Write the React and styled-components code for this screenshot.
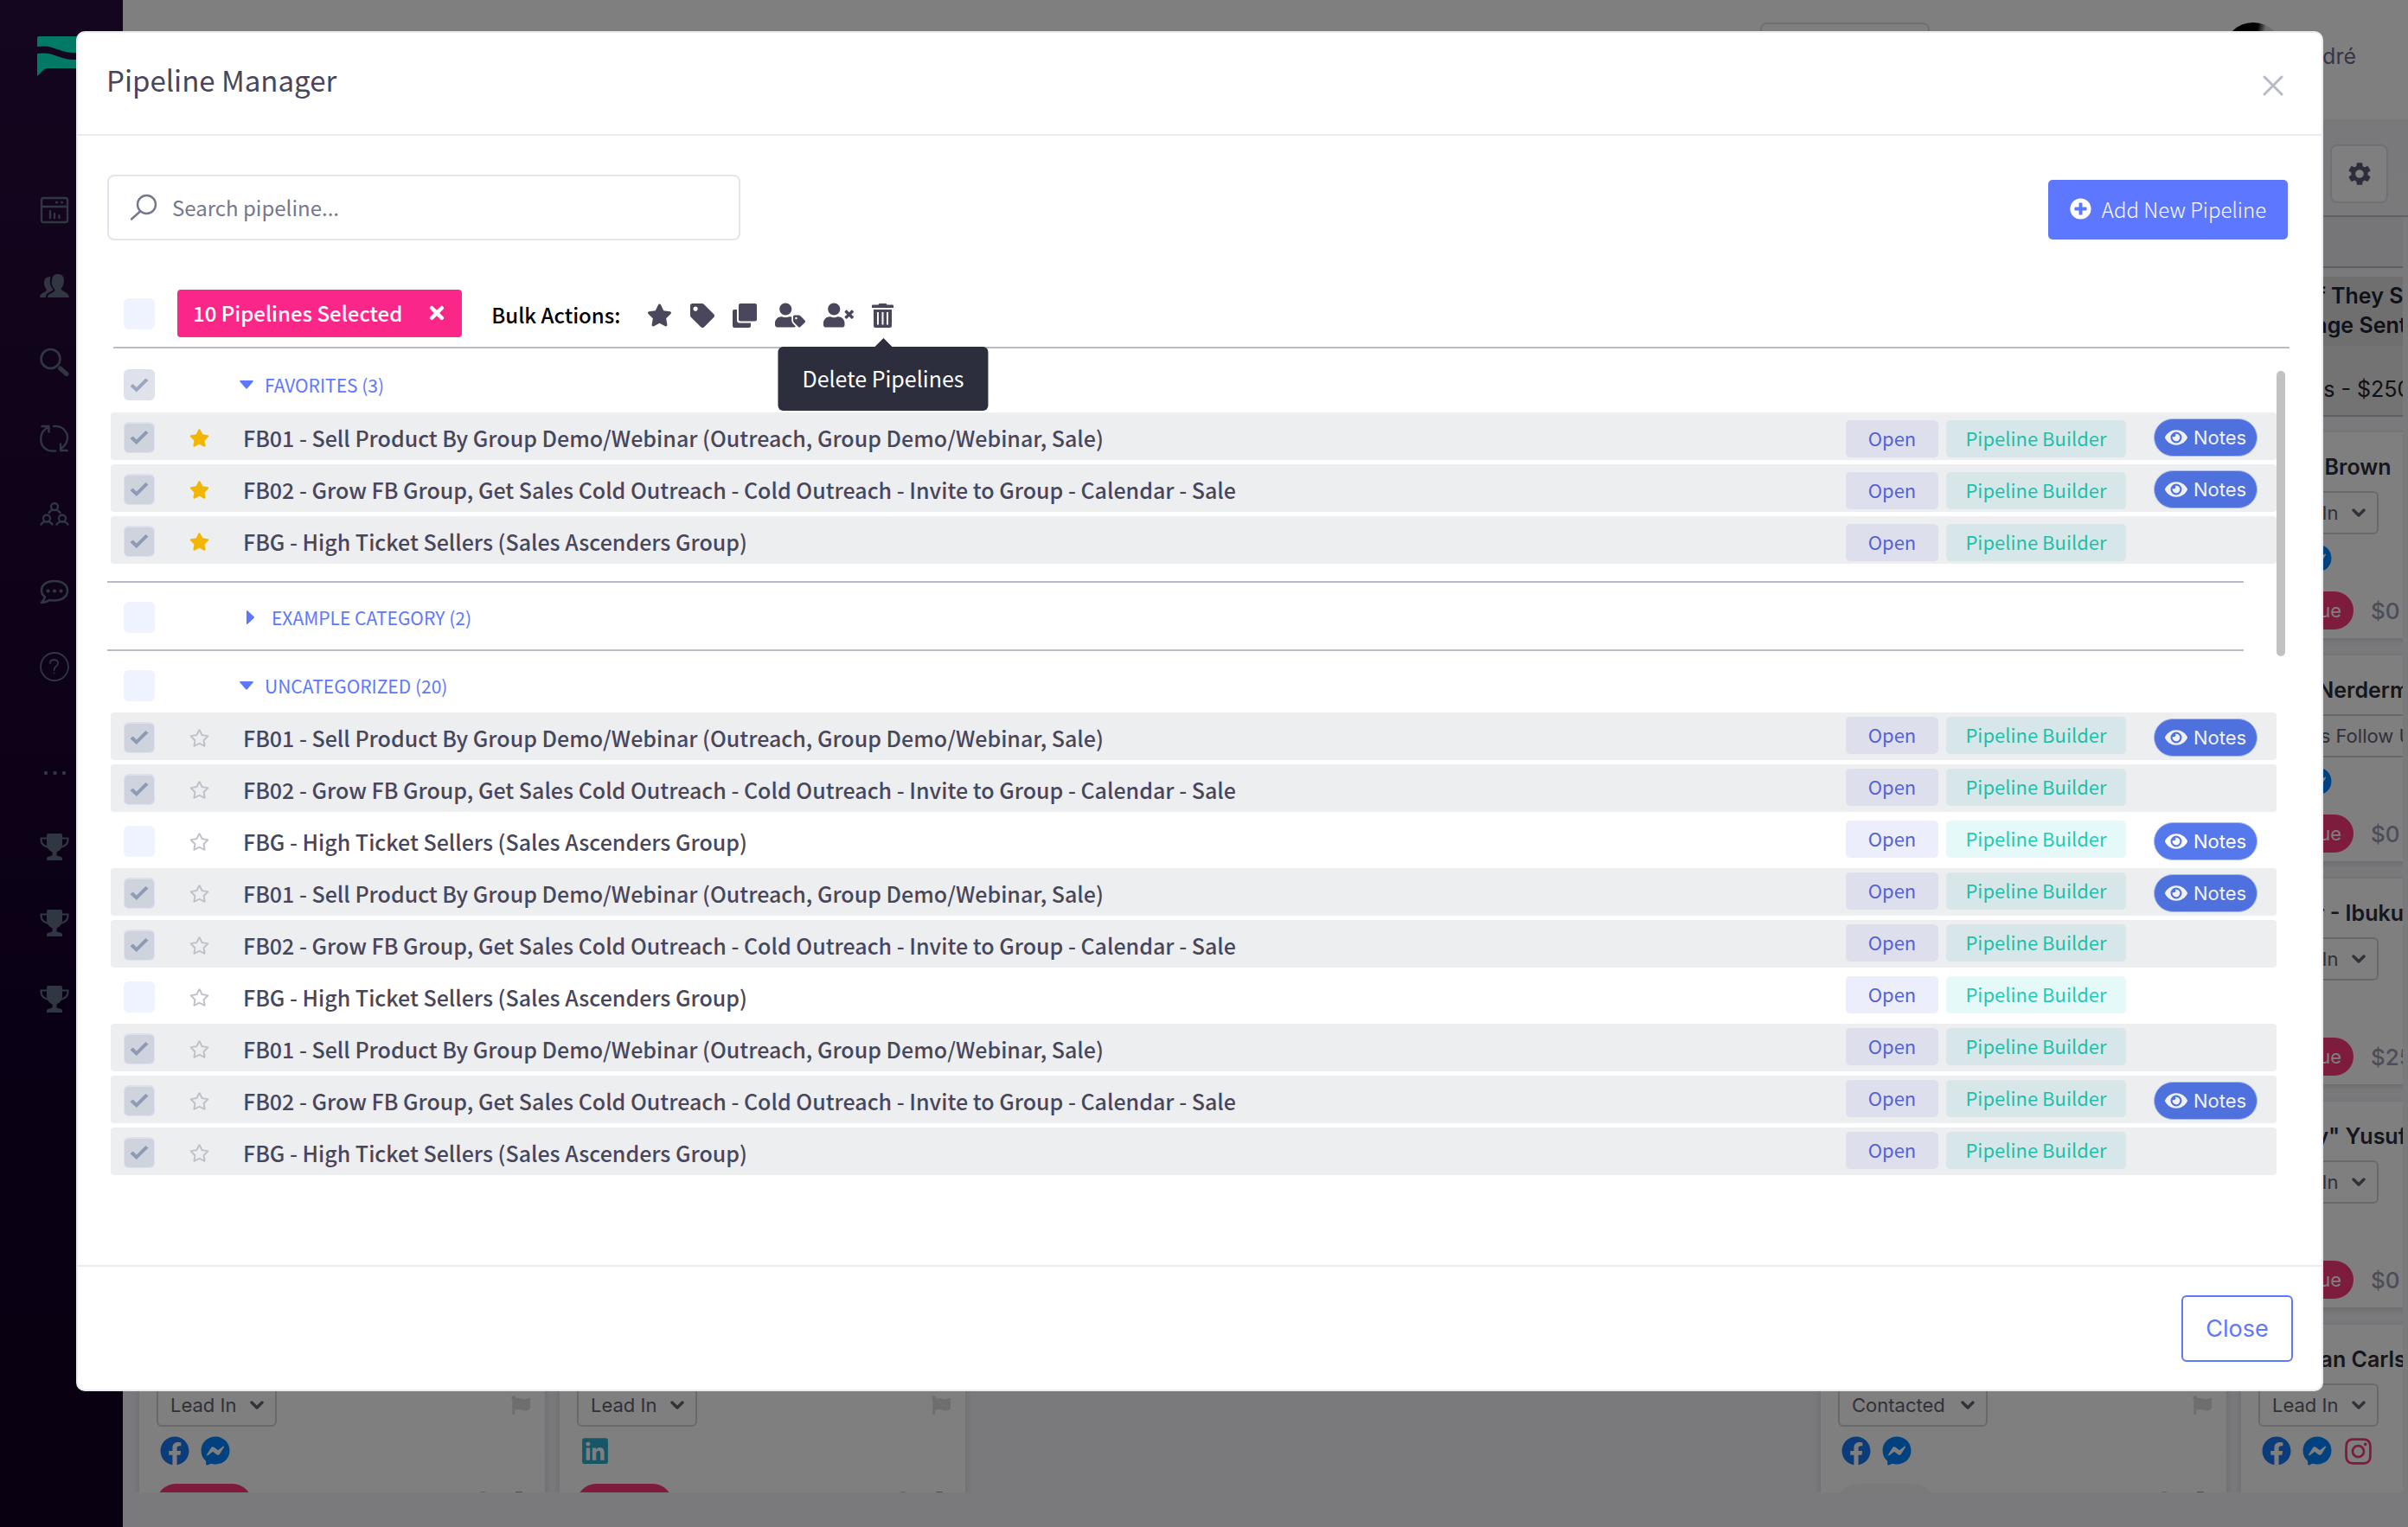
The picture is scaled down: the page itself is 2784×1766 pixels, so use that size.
import React, { useState } from "react";
import styled, { createGlobalStyle, css } from "styled-components";
import {
  FaStar, FaTag, FaUserTag, FaUserTimes, FaRegStar, FaEye, FaPlusCircle, FaTimes,
  FaFacebook, FaFacebookMessenger, FaLinkedin, FaInstagram, FaFlag, FaTrashAlt, FaUserCircle,
} from "react-icons/fa";
import { MdSettings } from "react-icons/md";

const sans = `"Noto Sans CJK JP", "Noto Sans", sans-serif`;
const ui = `Inter, "Noto Sans", sans-serif`;
const ink = "#48465b";
const brand = "#5d78ff";
const rule = "#b9bbc6";
const line = "#e9ebf1";

const GlobalStyle = createGlobalStyle`
  *, *::before, *::after { box-sizing: border-box; }
  body { margin: 0; background: #f4f4f8; font-family: ${ui}; color: ${ink}; }
  button, input, select { font: inherit; color: inherit; margin: 0; }
  button { border: 0; padding: 0; background: none; cursor: pointer; }
  svg { display: block; }
`;

/* ---------- page behind the dialog ---------- */

const Page = styled.div`
  display: flex;
  height: 100vh;
  overflow: hidden;
`;

const Sidebar = styled.nav`
  flex: none;
  display: flex;
  flex-direction: column;
  width: 142px;
  padding: 42px 0 0 42px;
  background: linear-gradient(#280c3c, #14002a 70%, #120022);
  color: #626d87;
`;

const LogoLink = styled.a`
  height: 157px;
`;

const NavButton = styled.button`
  display: flex;
  align-items: center;
  height: 88px;
  padding-left: 4px;
`;

const NavDots = styled(NavButton)`
  height: 121px;
  padding-top: 37px;
`;

const Main = styled.div`
  flex: 1;
  min-width: 0;
  display: flex;
  flex-direction: column;
  padding-bottom: 40px;
  background: linear-gradient(#ededf6, #f5f5f8 250px, #f4f4f8);
`;

const TopBar = styled.header`
  flex: none;
  display: flex;
  justify-content: flex-end;
  height: 138px;
  padding: 26px 60px 0;
  background: #fff;
`;

const TopSelect = styled.div`
  width: 196px;
  height: 70px;
  margin-right: 340px;
  border: 2px solid #e2e2ea;
  border-radius: 8px;
`;

const Avatar = styled.div`
  width: 68px;
  height: 68px;
  border-radius: 50%;
  background: linear-gradient(100deg, #000 50%, #d8d8d8 62%, #eee);
`;

const UserName = styled.span`
  margin-left: 14px;
  font-size: 25px;
  line-height: 78px;
  color: #6c6c90;
`;

const BoardTools = styled.div`
  flex: none;
  display: flex;
  justify-content: flex-end;
  align-items: center;
  height: 113px;
  padding: 15px 23px 0;
  border-bottom: 2px solid #c4c4c8;
`;

const GearButton = styled.button`
  display: grid;
  place-items: center;
  width: 67px;
  height: 68px;
  border: 2px solid #e0e0ea;
  border-radius: 8px;
  background: #fff;
  color: #5c5a78;
`;

const Board = styled.div`
  flex: 1;
  min-height: 0;
  display: flex;
  gap: 17px;
  margin-right: 6px;
  padding-left: 19px;
  overflow: hidden;
`;

const Column = styled.section`
  flex: none;
  width: 469px;
`;

const ColumnBar = styled.div`
  height: 59px;
  margin-bottom: 10px;
  background: #ececf0;
  border-bottom: 2px solid #bdbdc0;
`;

const ColumnHead = styled.header`
  height: 80px;
  padding: 5px 20px 0;
  background: #dfdfe0;
  color: #222230;
  font-size: 25px;
  font-weight: 600;
  line-height: 34px;
  white-space: nowrap;
`;

const ColumnTotal = styled.div`
  height: 82px;
  margin-bottom: 18px;
  padding: 0 20px;
  border-bottom: 2px solid #c0c0c2;
  background: #e6e6e8;
  color: #222230;
  font-size: 25px;
  line-height: 100px;
  white-space: nowrap;
`;

const Card = styled.article`
  height: 238px;
  margin-bottom: 20px;
  padding: 24px 0 0 20px;
  background: #fff;
  box-shadow: 0 2px 8px rgba(0, 0, 0, 0.14);
  white-space: nowrap;
`;

const CardTitle = styled.h3`
  height: 44px;
  margin: 0;
  font-size: 25px;
  font-weight: 600;
  line-height: 32px;
  color: #2c2c3a;
`;

const CardRow = styled.div`
  display: flex;
  justify-content: space-between;
  align-items: center;
  padding-right: 17px;
  color: #dcdcdc;
`;

const StageBox = styled.label`
  display: grid;
  width: ${(p) => (p.$wide ? 260 : p.$long ? 173 : 139)}px;
  height: 50px;
  align-items: center;
  color: #626270;

  > * { grid-area: 1 / 1; }
  > svg { justify-self: end; margin-right: 15px; pointer-events: none; }
`;

const StageSelect = styled.select`
  appearance: none;
  width: 100%;
  height: 100%;
  padding: 0 0 0 14px;
  border: 2px solid #d2d2d8;
  border-radius: 6px;
  background: none;
  color: #626270;
  font-size: 22px;
`;

const Socials = styled.div`
  display: flex;
  align-items: center;
  gap: 13px;
  height: 34px;
  margin: 11px 0 21px 4px;
`;

const CardFoot = styled.div`
  display: flex;
  align-items: center;
  gap: 20px;
  height: 44px;
  font-size: 26px;
  font-weight: 500;
  color: #9a9ab2;
`;

const Pill = styled.span`
  width: 110px;
  padding-right: 14px;
  border-radius: 22px;
  background: ${(p) => (p.$muted ? "#f5f5f5" : "#fd397a")};
  color: #fff;
  font-size: 22px;
  font-weight: 400;
  line-height: 44px;
  height: 44px;
  text-align: right;
`;

const FootIcons = styled.div`
  display: flex;
  gap: 18px;
  margin: 0 17px 0 auto;
`;

/* ---------- dialog ---------- */

const Backdrop = styled.div`
  position: fixed;
  inset: 0;
  padding: 36px 98px 0 88px;
  background: rgba(0, 0, 0, 0.5);
`;

const Dialog = styled.section`
  border: 2px solid ${line};
  border-radius: 10px;
  background: #fff;
  font-family: ${sans};
`;

const DialogHeader = styled.header`
  display: flex;
  justify-content: space-between;
  align-items: center;
  height: 119px;
  padding: 4px 44px 0 33px;
  border-bottom: 2px solid ${line};
`;

const DialogTitle = styled.h1`
  margin: 0;
  padding-bottom: 14px;
  font-size: 33px;
  font-weight: 400;
  line-height: 44px;
  color: ${ink};
`;

const DialogBody = styled.div`
  padding: 45px 37px 104px 34px;
`;

const Toolbar = styled.div`
  display: flex;
  justify-content: space-between;
  align-items: center;
  margin-right: 2px;
`;

const SearchBox = styled.label`
  display: flex;
  align-items: center;
  gap: 17px;
  width: 732px;
  height: 76px;
  padding: 0 24px;
  border: 2px solid #e2e5ec;
  border-radius: 8px;
  color: #74788d;
`;

const SearchInput = styled.input`
  flex: 1;
  border: 0;
  outline: 0;
  padding: 0;
  background: none;
  font-size: 24px;
  line-height: 36px;

  &::placeholder { color: #74788d; opacity: 1; }
`;

const AddButton = styled.button`
  display: flex;
  justify-content: center;
  align-items: center;
  gap: 12px;
  width: 277px;
  height: 69px;
  margin-top: 5px;
  padding-bottom: 2px;
  border-radius: 5px;
  background: ${brand};
  color: #fff;
  font-size: 24px;
  font-weight: 300;
`;

const BulkBar = styled.div`
  display: flex;
  align-items: center;
  margin: 57px 0 0 7px;
  padding: 0 0 11px 12px;
  border-bottom: 2px solid ${rule};
`;

const SelectedBadge = styled.div`
  display: flex;
  align-items: center;
  gap: 28px;
  height: 55px;
  margin: 0 34px 0 26px;
  padding: 0 17px 2px 18px;
  border-radius: 4px;
  background: #fb2788;
  color: #fff;
  font-size: 24px;
  font-weight: 500;
`;

const BulkLabel = styled.span`
  margin-right: 31px;
  padding-top: 3px;
  font-size: 24px;
  font-weight: 500;
  line-height: 36px;
  color: #000;
`;

const BulkIcons = styled.div`
  display: flex;
  align-items: center;
  gap: 21px;
  padding-top: 4px;
  color: #4a465c;
`;

const BulkButton = styled.button`
  position: relative;
  display: block;
`;

const Tooltip = styled.span`
  position: absolute;
  top: calc(100% + 22px);
  left: 50%;
  transform: translateX(-50%);
  z-index: 2;
  padding: 0 28px 2px;
  border-radius: 6px;
  background: #2c2e3e;
  color: #fff;
  font-size: 25px;
  line-height: 72px;
  white-space: nowrap;

  &::before {
    content: "";
    position: absolute;
    bottom: 100%;
    left: 50%;
    margin-left: -10px;
    border: 10px solid transparent;
    border-top: 0;
    border-bottom-color: #2c2e3e;
  }
`;

const ListArea = styled.div`
  display: flex;
  padding-right: 5px;
`;

const List = styled.div`
  flex: 1;
  min-width: 0;
`;

const ScrollThumb = styled.div`
  width: 10px;
  height: 330px;
  margin-top: 26px;
  border-radius: 5px;
  background: #c2c2c2;
`;

const Group = styled.section`
  margin-top: ${(p) => (p.$spaced ? 20 : 0)}px;

  &:not(:first-child)::before {
    content: "";
    display: block;
    height: 2px;
    margin-right: 38px;
    background: ${rule};
  }
`;

const GroupHead = styled.header`
  display: flex;
  align-items: center;
  gap: 98px;
  height: ${(p) => p.$height}px;
  padding: ${(p) => p.$top}px 0 0 19px;
`;

const GroupToggle = styled.button`
  display: flex;
  align-items: center;
  gap: ${(p) => (p.$open ? 13 : 20)}px;
  padding-left: ${(p) => (p.$open ? 0 : 8)}px;
  font-size: 21px;
  line-height: 30px;
  color: ${brand};
`;

const Rows = styled.ul`
  display: flex;
  flex-direction: column;
  gap: 5px;
  margin: 0 0 0 4px;
  padding: 0;
  list-style: none;
`;

const Row = styled.li`
  display: flex;
  align-items: center;
  height: 55px;
  padding: 2px 22px 0 15px;
  border-radius: 4px;
  background: ${(p) => (p.$selected ? "#edeef0" : "transparent")};
`;

const Check = styled.input.attrs({ type: "checkbox" })`
  appearance: none;
  flex: none;
  display: grid;
  place-items: center;
  width: 36px;
  height: 36px;
  border-radius: 6px;
  background: #eff2ff;

  &:checked {
    border: 1px solid #dde1ef;
    border-top-width: 2px;
    background: ${(p) => (p.$light ? "#dfe2eb" : "#ced3de")};
  }
  &:checked::after {
    content: "";
    width: 21px;
    height: 16px;
    background: ${(p) => (p.$light ? "#9aa7c0" : "#8f9bb5")};
    clip-path: polygon(0 58%, 15% 40%, 35% 65%, 85% 0, 100% 16%, 35% 100%);
  }
`;

const StarButton = styled.button`
  margin: 1px 39px 0 40px;
  color: ${(p) => (p.$on ? "#f2b600" : "#c0c1c8")};
`;

const Name = styled.span`
  flex: 1;
  font-size: 25px;
  font-weight: 500;
  line-height: 36px;
  color: ${ink};
`;

const Chips = styled.div`
  display: flex;
  gap: 9px;
  align-self: flex-start;
  padding-top: ${(p) => (p.$low ? 7 : 3)}px;
`;

const chip = css`
  height: 43px;
  padding-bottom: 3px;
  border-radius: 5px;
  font-size: 22px;
  line-height: 30px;
`;

const OpenButton = styled.button`
  ${chip}
  width: 107px;
  background: ${(p) => (p.$selected ? "#dedfec" : "#eceefc")};
  color: #5561d6;
`;

const BuilderButton = styled.button`
  ${chip}
  width: 208px;
  background: ${(p) => (p.$selected ? "#d7e7e9" : "#e6f9f9")};
  color: ${(p) => (p.$selected ? "#1dbfaa" : "#1dcbb4")};
`;

const NotesSlot = styled.div`
  width: 120px;
  margin-left: 32px;
`;

const NotesButton = styled.button`
  display: flex;
  justify-content: center;
  align-items: center;
  gap: 7px;
  width: 120px;
  height: 44px;
  border: 1px solid #a9b8ee;
  border-radius: 22px;
  background: ${(p) => (p.$selected ? "#4f71de" : "#5578ec")};
  color: ${(p) => (p.$selected ? "#f0f1f4" : "#fff")};
  font-family: ${ui};
  font-size: 22px;
`;

const DialogFooter = styled.footer`
  display: flex;
  justify-content: flex-end;
  align-items: center;
  height: 144px;
  padding-right: 33px;
  border-top: 2px solid ${line};
`;

const CloseButton = styled.button`
  width: 129px;
  height: 77px;
  border: 2px solid ${brand};
  border-radius: 6px;
  color: ${brand};
  font-family: ${ui};
  font-size: 27px;
`;

/* ---------- icons ---------- */

const stroke = { fill: "none", stroke: "currentColor", strokeLinecap: "round", strokeLinejoin: "round" };

const Logo = () => (
  <svg width="90" height="46" viewBox="0 0 90 46">
    <g fill="#00f5c8">
      <path d="M1 2Q1 0 3 0H90V10C70 10 62 20 42 19C24 18 20 9 1 12Z" />
      <path d="M1 20C20 17 24 26 42 27C62 28 70 18 90 18V37H14C8 37 6 42 1 46Z" />
    </g>
  </svg>
);

const DashboardIcon = () => (
  <svg width="34" height="34" viewBox="0 0 34 34" {...stroke} strokeWidth="2.4">
    <rect x="2" y="3" width="30" height="28" rx="2" />
    <path d="M2 13H32M12 18V26M17 21V26M22.500 23V26M19 8H20M25 8H26" />
  </svg>
);

const UsersIcon = () => (
  <svg width="34" height="34" viewBox="0 0 34 34" fill="currentColor">
    <path d="M14 10C15 4 17 3 21 3C26 3 28 6 28 11C28 15 26 18 24.500 20C26 24 33 23 34 30H9C9 26 13 26 15 24C17 23 18 22 17 20C14 17 13 14 14 10Z" />
    <path d="M12.500 6C7 6 5 9 5 13C5 16 6 19 8 21C7 25 0 24 0 30H7C7 25 10 25 13 23C15 22 16 21 15 20C12 17 11 12 12.500 6Z" />
  </svg>
);

const MagnifyIcon = () => (
  <svg width="34" height="34" viewBox="0 0 34 34" {...stroke}>
    <circle cx="12.500" cy="13" r="11" strokeWidth="2.600" />
    <path d="M23.500 24L31 30.500" strokeWidth="5" />
  </svg>
);

const SyncIcon = () => (
  <svg width="34" height="34" viewBox="0 0 34 34" {...stroke} strokeWidth="2.400">
    <path d="M10 4C-1 9-2 25 9 30.500Q13 32 18 31.500M2.500 3H10.500V9.500" />
    <path d="M16 3Q27 2 31.500 12Q34 22 24.500 29M24 23.500V31H31.500" />
  </svg>
);

const TeamIcon = () => (
  <svg width="34" height="34" viewBox="0 0 34 34" {...stroke} strokeWidth="2.300">
    <circle cx="17" cy="8" r="4" />
    <path d="M10.500 15Q12 13 14.500 11.500M23.500 15Q22 13 19.500 11.500" />
    <circle cx="8" cy="21.500" r="4" />
    <path d="M1.500 28.500Q3 26.500 5.500 25M14.500 28.500Q13 26.500 10.500 25" />
    <circle cx="26" cy="21.500" r="4" />
    <path d="M19.500 28.500Q21 26.500 23.500 25M32.500 28.500Q31 26.500 28.500 25" />
  </svg>
);

const ChatIcon = () => (
  <svg width="34" height="34" viewBox="0 0 34 34" {...stroke} strokeWidth="2.600">
    <path d="M17 6C8 6 2 10.500 2 17C2 20 3.500 22.500 6 24.500Q5 28 2 31Q8 30.500 11 28C25 30.500 32 24 32 17C32 10.500 26 6 17 6Z" />
    <path d="M9.500 17.500H9.600M17 17.500H17.100M24.500 17.500H24.600" strokeWidth="4.200" />
  </svg>
);

const HelpIcon = () => (
  <svg width="34" height="34" viewBox="0 0 34 34" {...stroke} strokeWidth="1.800">
    <circle cx="17" cy="17" r="16" />
    <path d="M12 13Q12 9 16.500 9Q21 9 21 13Q21 15.500 18.500 17Q16.500 18.500 16.500 21M16.500 24.500V24.600" />
  </svg>
);

const DotsIcon = () => (
  <svg width="34" height="6" viewBox="0 0 34 6" fill="currentColor">
    <circle cx="7" cy="3" r="2.200" />
    <circle cx="17.500" cy="3" r="2.200" />
    <circle cx="28" cy="3" r="2.200" />
  </svg>
);

const TrophyIcon = () => (
  <svg width="34" height="32" viewBox="0 0 34 32">
    <path d="M10 0H24Q26 0 26 2V12C26 17 23 20 19.500 21.500V25Q20 26 23 26.500Q26 27 26 29V31H8V29Q8 27 11 26.500Q14 26 14.500 25V21.500C11 20 8 17 8 12V2Q8 0 10 0Z" fill="currentColor" />
    <path d="M8 5.500H1.500C1 11 4 15 11 16M26 5.500H32.500C33 11 30 15 23 16" fill="none" stroke="currentColor" strokeWidth="2.200" />
  </svg>
);

const SearchIcon = () => (
  <svg width="32" height="32" viewBox="0 0 32 32" {...stroke} strokeWidth="2.400">
    <circle cx="19.500" cy="12.500" r="10.500" />
    <path d="M12 20.500L2 29.500" />
  </svg>
);

const CrossIcon = () => (
  <svg width="24" height="24" viewBox="0 0 24 24" {...stroke} stroke="#b9bac8" strokeWidth="3">
    <path d="M2 2L22 22M22 2L2 22" />
  </svg>
);

const CloneIcon = () => (
  <svg width="28" height="28" viewBox="0 0 28 28" fill="currentColor">
    <path d="M9 0H26Q28 0 28 2V18.500Q28 20.500 26 20.500H9Q7 20.500 7 18.500V2Q7 0 9 0Z" />
    <path d="M5 7H2Q0 7 0 9V26Q0 28 2 28H19Q21 28 21 26V22.500H8Q5 22.500 5 19.500Z" />
  </svg>
);

const TrashIcon = () => (
  <svg width="25" height="28" viewBox="0 0 25 28" fill="currentColor">
    <path d="M0 2.500Q0 1.500 1 1.500H7.500L8.500 0H16.500L17.500 1.500H24Q25 1.500 25 2.500V5H0Z" />
    <path fillRule="evenodd" d="M2 7H23V25.500Q23 28 20.500 28H4.500Q2 28 2 25.500ZM6 10V24.500H8V10ZM11.500 10V24.500H13.500V10ZM17 10V24.500H19V10Z" />
  </svg>
);

const Chevron = () => (
  <svg width="16" height="12" viewBox="0 0 16 12" {...stroke} strokeWidth="3.400">
    <path d="M2 3L8 9L14 3" />
  </svg>
);

const CaretDown = () => (
  <svg width="16" height="10" viewBox="0 0 16 10" fill="currentColor"><path d="M1 0H15Q16.500 0 15.500 1.500L9 9Q8 10 7 9L0.500 1.500Q-0.500 0 1 0Z" /></svg>
);

const CaretRight = () => (
  <svg width="9" height="16" viewBox="0 0 9 16" fill="currentColor"><path d="M0 1Q0-0.500 1.500 0.500L8.500 7Q9.300 8 8.500 9L1.500 15.500Q0 16.500 0 15Z" /></svg>
);

/* ---------- data ---------- */

const FB01 = "FB01 - Sell Product By Group Demo/Webinar (Outreach, Group Demo/Webinar, Sale)";
const FB02 = "FB02 - Grow FB Group, Get Sales Cold Outreach - Cold Outreach - Invite to Group - Calendar - Sale";
const FBG = "FBG - High Ticket Sellers (Sales Ascenders Group)";

const groups = [
  {
    title: "FAVORITES (3)", open: true, checked: true, height: 74, top: 10, low: true,
    rows: [[FB01, true, true], [FB02, true, true], [FBG, true, false]],
  },
  { title: "EXAMPLE CATEGORY (2)", open: false, checked: false, height: 77, top: 2, spaced: true, rows: [] },
  {
    title: "UNCATEGORIZED (20)", open: true, checked: false, height: 71, top: 8,
    rows: [
      [FB01, true, true], [FB02, true, false], [FBG, false, true],
      [FB01, true, true], [FB02, true, false], [FBG, false, false],
      [FB01, true, false], [FB02, true, true], [FBG, true, false],
    ],
  },
];

const leads = [
  { title: "Chloe Brown", stage: "Lead In", socials: ["fb", "ms"], amount: "$0" },
  { title: "Mark Nerdermann", stage: "Needs Follow Up", socials: ["fb", "ms"], amount: "$0" },
  { title: "Mayor - Ibukunle", stage: "Lead In", socials: [], amount: "$250" },
  { title: "\"Dejay\" Yusuf", stage: "Lead In", socials: [], amount: "$0" },
  { title: "Brendan Carlson", stage: "Lead In", socials: ["fb", "ms", "ig"] },
];

const columns = [
  { last: { stage: "Lead In", socials: ["fb", "ms"], pill: "due" } },
  { last: { stage: "Lead In", socials: ["in"], pill: "due" } },
  {},
  {},
  { last: { stage: "Contacted", socials: ["fb", "ms"], pill: "muted" } },
];

const socialIcons = {
  fb: <FaFacebook size={34} color="#1877f2" />,
  ms: <FaFacebookMessenger size={34} color="#0084ff" />,
  in: <FaLinkedin size={34} color="#2aaecf" />,
  ig: <FaInstagram size={35} color="#fd397a" />,
};

function Stage({ value }) {
  return (
    <StageBox $wide={value.length > 9} $long={value === "Contacted"}>
      <StageSelect aria-label="Stage" defaultValue={value}><option>{value}</option></StageSelect>
      <Chevron />
    </StageBox>
  );
}

function LeadCard({ lead, flag, children }) {
  return (
    <Card>
      <CardTitle>{lead.title}</CardTitle>
      <CardRow><Stage value={lead.stage} />{flag && <FaFlag size={22} />}</CardRow>
      <Socials>{lead.socials.map((s) => <React.Fragment key={s}>{socialIcons[s]}</React.Fragment>)}</Socials>
      <CardFoot>{children}</CardFoot>
    </Card>
  );
}

function PipelineRow({ name, selected, notes, favorite }) {
  const [checked, setChecked] = useState(selected);
  return (
    <Row $selected={checked}>
      <Check aria-label={name} checked={checked} onChange={(e) => setChecked(e.target.checked)} />
      <StarButton $on={favorite} aria-label="Favorite">
        {favorite ? <FaStar size={23} /> : <FaRegStar size={23} />}
      </StarButton>
      <Name>{name}</Name>
      <Chips $low={favorite}>
        <OpenButton $selected={checked}>Open</OpenButton>
        <BuilderButton $selected={checked}>Pipeline Builder</BuilderButton>
      </Chips>
      <NotesSlot>
        {notes && <NotesButton $selected={checked}><FaEye size={26} />Notes</NotesButton>}
      </NotesSlot>
    </Row>
  );
}

export default function App() {
  return (
    <>
      <GlobalStyle />
      <Page>
        <Sidebar>
          <LogoLink href="#" aria-label="Home"><Logo /></LogoLink>
          {[DashboardIcon, UsersIcon, MagnifyIcon, SyncIcon, TeamIcon, ChatIcon, HelpIcon].map((Icon, i) => (
            <NavButton key={i}><Icon /></NavButton>
          ))}
          <NavDots><DotsIcon /></NavDots>
          {[0, 1, 2].map((i) => <NavButton key={i}><TrophyIcon /></NavButton>)}
        </Sidebar>
        <Main>
          <TopBar>
            <TopSelect />
            <Avatar />
            <UserName>André</UserName>
          </TopBar>
          <BoardTools>
            <GearButton aria-label="Settings"><MdSettings size={32} /></GearButton>
          </BoardTools>
          <Board>
            {columns.map(({ last }, i) => (
              <Column key={i}>
                <ColumnBar />
                <ColumnHead />
                <ColumnTotal />
                {last && (
                  <>
                    <Card /><Card /><Card /><Card />
                    <LeadCard lead={last} flag>
                      <Pill $muted={last.pill === "muted"} />
                      <FootIcons><FaUserCircle size={22} /><FaTrashAlt size={26} /></FootIcons>
                    </LeadCard>
                  </>
                )}
              </Column>
            ))}
            <Column>
              <ColumnBar />
              <ColumnHead>Now If They Saw<br />Message Sent</ColumnHead>
              <ColumnTotal>5 Deals - $250</ColumnTotal>
              {leads.map((lead) => (
                <LeadCard key={lead.title} lead={lead}>
                  {lead.amount && <><Pill>Overdue</Pill>{lead.amount}</>}
                </LeadCard>
              ))}
            </Column>
          </Board>
        </Main>
      </Page>

      <Backdrop>
        <Dialog role="dialog" aria-labelledby="dialog-title">
          <DialogHeader>
            <DialogTitle id="dialog-title">Pipeline Manager</DialogTitle>
            <button aria-label="Close dialog"><CrossIcon /></button>
          </DialogHeader>
          <DialogBody>
            <Toolbar>
              <SearchBox>
                <SearchIcon />
                <SearchInput type="text" aria-label="Search pipeline" placeholder="Search pipeline..." />
              </SearchBox>
              <AddButton><FaPlusCircle size={25} />Add New Pipeline</AddButton>
            </Toolbar>
            <BulkBar>
              <Check aria-label="Select all pipelines" />
              <SelectedBadge>
                10 Pipelines Selected
                <button aria-label="Clear selection"><FaTimes size={24} /></button>
              </SelectedBadge>
              <BulkLabel>Bulk Actions:</BulkLabel>
              <BulkIcons>
                <BulkButton aria-label="Favorite"><FaStar size={29} /></BulkButton>
                <BulkButton aria-label="Tag"><FaTag size={28} /></BulkButton>
                <BulkButton aria-label="Duplicate"><CloneIcon /></BulkButton>
                <BulkButton aria-label="Assign"><FaUserTag size={35} /></BulkButton>
                <BulkButton aria-label="Unassign"><FaUserTimes size={35} /></BulkButton>
                <BulkButton aria-label="Delete">
                  <TrashIcon />
                  <Tooltip role="tooltip">Delete Pipelines</Tooltip>
                </BulkButton>
              </BulkIcons>
            </BulkBar>
            <ListArea>
              <List>
                {groups.map((g) => (
                  <Group key={g.title} $spaced={g.spaced}>
                    <GroupHead $height={g.height} $top={g.top}>
                      <Check $light aria-label={g.title} defaultChecked={g.checked} />
                      <GroupToggle $open={g.open} aria-expanded={g.open}>
                        {g.open ? <CaretDown /> : <CaretRight />}
                        {g.title}
                      </GroupToggle>
                    </GroupHead>
                    {g.open && (
                      <Rows>
                        {g.rows.map(([name, selected, notes], i) => (
                          <PipelineRow key={i} name={name} selected={selected} notes={notes} favorite={!!g.low} />
                        ))}
                      </Rows>
                    )}
                  </Group>
                ))}
              </List>
              <ScrollThumb />
            </ListArea>
          </DialogBody>
          <DialogFooter>
            <CloseButton>Close</CloseButton>
          </DialogFooter>
        </Dialog>
      </Backdrop>
    </>
  );
}
